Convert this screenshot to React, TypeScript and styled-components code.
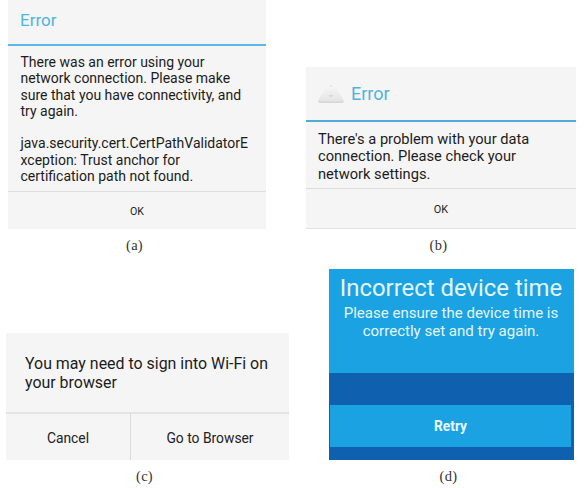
import React from 'react';
import styled, { createGlobalStyle } from 'styled-components';

const GlobalStyle = createGlobalStyle`
  * { box-sizing: border-box; }
  body { margin: 0; background: #fff; overflow: hidden; }
`;

const Page = styled.main`
  display: grid;
  grid-template-columns: 298px 290px;
  grid-template-rows: 229px 231px;
  width: 588px;
  height: 488px;
  overflow: hidden;
  font-family: Roboto, sans-serif;
`;

const Figure = styled.figure<{ $left: number; $width: number }>`
  display: flex;
  flex-direction: column;
  justify-content: flex-end;
  width: ${p => p.$width}px;
  height: 100%;
  margin: 0 0 0 ${p => p.$left}px;
`;

/* Zero-height box, so panels align to the bottom of their grid row. */
const Caption = styled.figcaption<{ $shift: number }>`
  flex: none;
  height: 0;
  padding-right: ${p => p.$shift}px;
  color: #333;
  font-family: 'Liberation Serif', serif;
  font-size: 14.5px;
  letter-spacing: 0.3px;
  line-height: 32px;
  text-align: center;
`;

const Dialog = styled.section<{ $height: number; $edge?: string }>`
  display: flex;
  flex: none;
  flex-direction: column;
  height: ${p => p.$height}px;
  background: #f5f5f5;
  color: #1c1c1c;
  border-bottom: ${p => (p.$edge ? `1px solid ${p.$edge}` : '0')};
`;

const TitleBar = styled.header<{ $height: number; $size: number; $lift: number; $rule: string }>`
  display: flex;
  flex: none;
  align-items: center;
  gap: 7px;
  height: ${p => p.$height}px;
  padding: 0 12px ${p => p.$lift}px;
  border-bottom: 2px solid ${p => p.$rule};
  color: #4db5dc;
  font-size: ${p => p.$size}px;
`;

const Title = styled.h2`
  margin: 0;
  font-size: inherit;
  font-weight: 400;
  line-height: 1.2;
`;

const Message = styled.div<{ $pad: string; $size: number; $leading: number }>`
  flex: 1;
  padding: ${p => p.$pad};
  font-size: ${p => p.$size}px;
  line-height: ${p => p.$leading}px;
  white-space: pre;
`;

const Actions = styled.footer<{ $height: number; $columns?: string; $rule?: string }>`
  display: grid;
  flex: none;
  grid-template-columns: ${p => p.$columns ?? '1fr'};
  height: ${p => p.$height}px;
  border-top: ${p => p.$rule ?? '1px solid #dedede'};
`;

const Action = styled.button<{ $size: number; $drop?: number }>`
  border: 0;
  padding: ${p => p.$drop ?? 0}px 0 0;
  background: none;
  color: #222;
  font: 400 ${p => p.$size}px Roboto, sans-serif;

  & + & { border-left: 1px solid #dadada; }
`;

const TimeScreen = styled.section`
  display: flex;
  flex: none;
  flex-direction: column;
  height: 191px;
  background: #0f61b0;
  color: #e4f6fd;
  text-align: center;
`;

const Notice = styled.div`
  height: 104px;
  padding: 5px 1px 0 0;
  background: #1ba2e2;
`;

const NoticeTitle = styled.h1`
  margin: 0 0 3px;
  font-size: 23.9px;
  font-weight: 400;
  line-height: 28px;
  white-space: nowrap;
`;

const NoticeText = styled.p`
  margin: 0;
  font-size: 15.05px;
  line-height: 17.5px;
  white-space: pre;
`;

const RetryButton = styled.button`
  height: 42px;
  margin: 32px 3px 0 1px;
  border: 0;
  padding: 0;
  background: #1ba2e2;
  color: #e8f8fe;
  font: 700 13.8px Roboto, sans-serif;
`;

const DeviceIcon = () => (
  <svg width="26" height="20" viewBox="0 0 26 20" aria-hidden="true">
    <defs>
      <linearGradient id="shell" x1="0" y1="0" x2="0" y2="1">
        <stop offset="0" stopColor="#f3f3f3" />
        <stop offset="1" stopColor="#e2e2e2" />
      </linearGradient>
    </defs>
    <path d="M6.5 6Q7.2 4.5 9 4.5H17Q18.8 4.5 19.5 6L25.6 16V17.5Q25.4 19 23.5 19H2.5Q.5 19 .3 17.5V16Z" fill="url(#shell)" />
    <path d="M.4 16.5V17.5Q.7 19 2.5 19H23.5Q25.3 19 25.6 17.5V16.5Q24.8 17.6 23 17.6H3Q1.2 17.6 .4 16.5Z" fill="#d6d6d6" />
    <path d="M11.8 2.2L13 1.8L14.2 2.2" fill="none" stroke="#d2d2d2" strokeWidth=".8" />
    <path d="M11 11.6Q13 12.6 15 11.6" fill="none" stroke="#cbcbcb" strokeWidth="1" />
  </svg>
);

export default function App() {
  return (
    <>
      <GlobalStyle />
      <Page>
        <Figure $left={8} $width={258}>
          <Dialog $height={229}>
            <TitleBar $height={46} $size={17} $lift={4} $rule="#5cb8e6">
              <Title>Error</Title>
            </TitleBar>
            <Message $pad="8px 12.5px 0" $size={14} $leading={16.3}>
              {`There was an error using your
network connection. Please make
sure that you have connectivity, and
try again.

java.security.cert.CertPathValidatorE
xception: Trust anchor for
certification path not found.`}
            </Message>
            <Actions $height={38}>
              <Action $size={10.6} $drop={1}>OK</Action>
            </Actions>
          </Dialog>
          <Caption $shift={5}>(a)</Caption>
        </Figure>

        <Figure $left={8} $width={270}>
          <Dialog $height={162} $edge="#e0e0e0">
            <TitleBar $height={55} $size={18} $lift={0} $rule="#4fabd8">
              <DeviceIcon />
              <Title>Error</Title>
            </TitleBar>
            <Message $pad="9px 12px 0" $size={14.67} $leading={17.25}>
              {`There's a problem with your data
connection. Please check your
network settings.`}
            </Message>
            <Actions $height={40}>
              <Action $size={10.9} $drop={2}>OK</Action>
            </Actions>
          </Dialog>
          <Caption $shift={5}>(b)</Caption>
        </Figure>

        <Figure $left={6} $width={283}>
          <Dialog $height={127}>
            <Message $pad="22px 19px 0" $size={15.93} $leading={18.7}>
              {`You may need to sign into Wi-Fi on
your browser`}
            </Message>
            <Actions $height={48} $columns="124px 1fr" $rule="2px solid #e4e4e4">
              <Action $size={13.85} $drop={2}>Cancel</Action>
              <Action $size={13.85} $drop={2}>Go to Browser</Action>
            </Actions>
          </Dialog>
          <Caption $shift={6}>(c)</Caption>
        </Figure>

        <Figure $left={31} $width={245}>
          <TimeScreen>
            <Notice>
              <NoticeTitle>Incorrect device time</NoticeTitle>
              <NoticeText>
                {`Please ensure the device time is
correctly set and try again.`}
              </NoticeText>
            </Notice>
            <RetryButton>Retry</RetryButton>
          </TimeScreen>
          <Caption $shift={6}>(d)</Caption>
        </Figure>
      </Page>
    </>
  );
}
